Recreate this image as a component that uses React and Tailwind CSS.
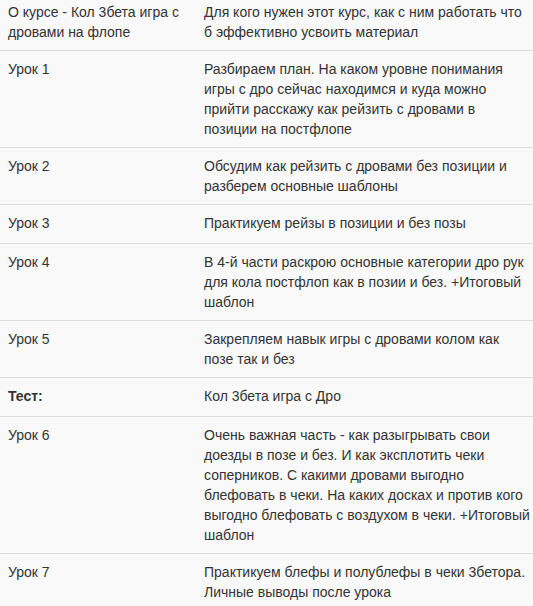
import React from "react";

const ROWS = [
  {
    title: ["О курсе - Кол 3бета игра с", "дровами на флопе"],
    text: ["Для кого нужен этот курс, как с ним работать что", "б эффективно усвоить материал"],
  },
  {
    title: ["Урок 1"],
    text: [
      "Разбираем план. На каком уровне понимания",
      "игры с дро сейчас находимся и куда можно",
      "прийти расскажу как рейзить с дровами в",
      "позиции на постфлопе",
    ],
  },
  {
    title: ["Урок 2"],
    text: ["Обсудим как рейзить с дровами без позиции и", "разберем основные шаблоны"],
  },
  { title: ["Урок 3"], text: ["Практикуем рейзы в позиции и без позы"] },
  {
    title: ["Урок 4"],
    text: [
      "В 4-й части раскрою основные категории дро рук",
      "для кола постфлоп как в позии и без. +Итоговый",
      "шаблон",
    ],
  },
  {
    title: ["Урок 5"],
    text: ["Закрепляем навык игры с дровами колом как", "позе так и без"],
  },
  { title: ["Тест:"], text: ["Кол 3бета игра с Дро"], bold: true },
  {
    title: ["Урок 6"],
    text: [
      "Очень важная часть - как разыгрывать свои",
      "доезды в позе и без. И как эксплотить чеки",
      "соперников. С какими дровами выгодно",
      "блефовать в чеки. На каких досках и против кого",
      "выгодно блефовать с воздухом в чеки. +Итоговый",
      "шаблон",
    ],
  },
  {
    title: ["Урок 7"],
    text: ["Практикуем блефы и полублефы в чеки 3бетора.", "Личные выводы после урока"],
  },
];

const Lines = ({ lines }) => (
  <div className="min-h-[22px]">
    {lines.map((l, i) => (
      <div key={i} className="whitespace-nowrap">
        {l}
      </div>
    ))}
  </div>
);

export default function App() {
  return (
    <div
      className="min-h-screen overflow-hidden bg-[#f9f9f9] text-[14px] leading-5 text-[#333]"
      style={{ fontFamily: '"Liberation Sans", Arial, sans-serif' }}
    >
      {ROWS.map((row, i) => (
        <div
          key={i}
          className={
            i === 0
              ? "grid grid-cols-[196px_minmax(0,1fr)]"
              : "grid grid-cols-[196px_minmax(0,1fr)] border-t border-[#ddd]"
          }
        >
          <div className={i === 0 ? "px-2 pt-[2px] pb-2" : "p-2"}>
            <div className={row.bold ? "font-bold" : ""}>
              <Lines lines={row.title} />
            </div>
          </div>
          <div className={i === 0 ? "px-2 pt-[2px] pb-2" : "p-2"}>
            <Lines lines={row.text} />
          </div>
        </div>
      ))}
    </div>
  );
}
